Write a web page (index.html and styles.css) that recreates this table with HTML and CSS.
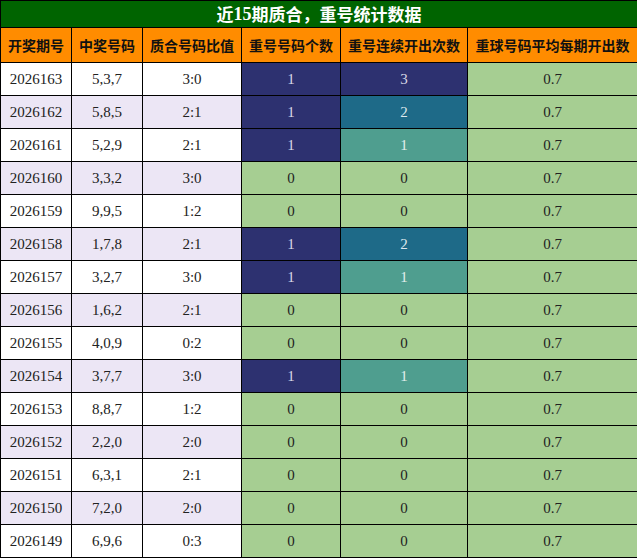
FILE: index.html
```html
<!DOCTYPE html>
<html lang="zh">
<head>
<meta charset="utf-8">
<title>近15期质合，重号统计数据</title>
<link rel="stylesheet" href="styles.css">
</head>
<body>
<table class="stats">
  <colgroup>
    <col class="c1"><col class="c2"><col class="c3"><col class="c4"><col class="c5"><col class="c6">
  </colgroup>
  <thead>
    <tr class="title-row"><th colspan="6"><div class="title">近<span class="num">15</span>期质合，重号统计数据</div></th></tr>
    <tr class="head-row">
      <th><div class="hd">开奖期号</div></th><th><div class="hd">中奖号码</div></th><th><div class="hd">质合号码比值</div></th><th><div class="hd">重号号码个数</div></th><th><div class="hd">重号连续开出次数</div></th><th><div class="hd">重球号码平均每期开出数</div></th>
    </tr>
  </thead>
  <tbody>
    <tr class="odd"><td>2026163</td><td>5,3,7</td><td>3:0</td><td class="navy">1</td><td class="navy">3</td><td class="green">0.7</td></tr>
    <tr class="even"><td>2026162</td><td>5,8,5</td><td>2:1</td><td class="navy">1</td><td class="teal">2</td><td class="green">0.7</td></tr>
    <tr class="odd"><td>2026161</td><td>5,2,9</td><td>2:1</td><td class="navy">1</td><td class="sea">1</td><td class="green">0.7</td></tr>
    <tr class="even"><td>2026160</td><td>3,3,2</td><td>3:0</td><td class="green">0</td><td class="green">0</td><td class="green">0.7</td></tr>
    <tr class="odd"><td>2026159</td><td>9,9,5</td><td>1:2</td><td class="green">0</td><td class="green">0</td><td class="green">0.7</td></tr>
    <tr class="even"><td>2026158</td><td>1,7,8</td><td>2:1</td><td class="navy">1</td><td class="teal">2</td><td class="green">0.7</td></tr>
    <tr class="odd"><td>2026157</td><td>3,2,7</td><td>3:0</td><td class="navy">1</td><td class="sea">1</td><td class="green">0.7</td></tr>
    <tr class="even"><td>2026156</td><td>1,6,2</td><td>2:1</td><td class="green">0</td><td class="green">0</td><td class="green">0.7</td></tr>
    <tr class="odd"><td>2026155</td><td>4,0,9</td><td>0:2</td><td class="green">0</td><td class="green">0</td><td class="green">0.7</td></tr>
    <tr class="even"><td>2026154</td><td>3,7,7</td><td>3:0</td><td class="navy">1</td><td class="sea">1</td><td class="green">0.7</td></tr>
    <tr class="odd"><td>2026153</td><td>8,8,7</td><td>1:2</td><td class="green">0</td><td class="green">0</td><td class="green">0.7</td></tr>
    <tr class="even"><td>2026152</td><td>2,2,0</td><td>2:0</td><td class="green">0</td><td class="green">0</td><td class="green">0.7</td></tr>
    <tr class="odd"><td>2026151</td><td>6,3,1</td><td>2:1</td><td class="green">0</td><td class="green">0</td><td class="green">0.7</td></tr>
    <tr class="even"><td>2026150</td><td>7,2,0</td><td>2:0</td><td class="green">0</td><td class="green">0</td><td class="green">0.7</td></tr>
    <tr class="odd"><td>2026149</td><td>6,9,6</td><td>0:3</td><td class="green">0</td><td class="green">0</td><td class="green">0.7</td></tr>
  </tbody>
</table>
</body>
</html>
```
FILE: styles.css
```css
html, body {
  margin: 0;
  padding: 0;
  background: #ffffff;
}

.stats {
  border-collapse: collapse;
  table-layout: fixed;
  width: 637px;
  font-family: "Liberation Serif", "Noto Sans CJK SC", serif;
  font-size: 15px;
  color: #222;
}

.c1 { width: 71px; }
.c2 { width: 71px; }
.c3 { width: 99px; }
.c4 { width: 99px; }
.c5 { width: 127px; }
.c6 { width: 170px; }

.stats th,
.stats td {
  border: 1px solid #000;
  padding: 0;
  text-align: center;
  vertical-align: middle;
  overflow: hidden;
  white-space: nowrap;
}

.title-row th {
  background: #006400;
  color: #ffffff;
}

.title {
  height: 26px;
  display: flex;
  align-items: center;
  justify-content: center;
  overflow: hidden;
  font-family: "Noto Sans CJK SC", sans-serif;
  font-size: 17px;
  font-weight: bold;
  line-height: 20px;
}

.title .num {
  font-family: "Liberation Serif", serif;
  font-weight: bold;
  font-size: 18px;
}

.head-row th {
  background: #ff8c00;
  color: #111;
}

.hd {
  height: 34px;
  display: flex;
  align-items: center;
  justify-content: center;
  overflow: hidden;
  font-family: "Noto Sans CJK SC", sans-serif;
  font-size: 14px;
  font-weight: bold;
  line-height: 18px;
}

.stats td {
  height: 32px;
}

.odd td { background: #ffffff; }
.even td { background: #ece6f5; }

.stats td.navy { background: #2d3170; color: #d8d8e6; }
.stats td.teal { background: #1e6a88; color: #dde8ee; }
.stats td.sea { background: #4f9e8f; color: #e2efec; }
.stats td.green { background: #a6ce92; color: #222; }
```
